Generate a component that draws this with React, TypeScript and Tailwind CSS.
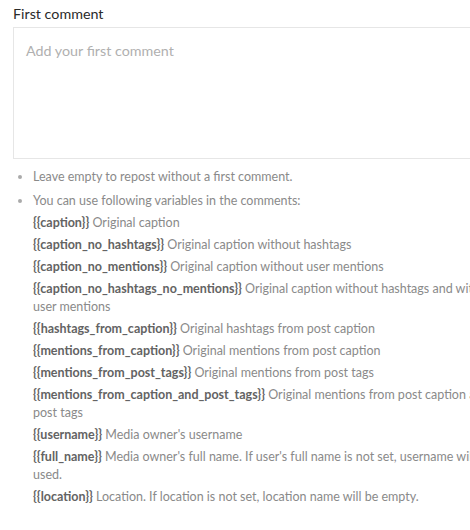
export default function App() {
  const vars: { name: string; desc: string }[] = [
    { name: "{{caption}}", desc: "Original caption" },
    { name: "{{caption_no_hashtags}}", desc: "Original caption without hashtags" },
    { name: "{{caption_no_mentions}}", desc: "Original caption without user mentions" },
    {
      name: "{{caption_no_hashtags_no_mentions}}",
      desc: "Original caption without hashtags and without user mentions",
    },
    { name: "{{hashtags_from_caption}}", desc: "Original hashtags from post caption" },
    { name: "{{mentions_from_caption}}", desc: "Original mentions from post caption" },
    { name: "{{mentions_from_post_tags}}", desc: "Original mentions from post tags" },
    {
      name: "{{mentions_from_caption_and_post_tags}}",
      desc: "Original mentions from post caption and post tags",
    },
    { name: "{{username}}", desc: "Media owner's username" },
    {
      name: "{{full_name}}",
      desc: "Media owner's full name. If user's full name is not set, username will be used.",
    },
    { name: "{{location}}", desc: "Location. If location is not set, location name will be empty." },
  ];

  return (
    <div className="h-[530px] w-[470px] overflow-hidden bg-white font-['Lato','Liberation_Sans',sans-serif]">
      <div className="w-[500px] pl-[13px] pt-[5px]">
        {/* Title */}
        <label className="block text-[14.3px] leading-[17px] text-[#2a2a2a]">First comment</label>
        <textarea
          className="mt-[5px] block h-[132px] w-full resize-none border border-[#e6e6e6] px-[12px] py-[12px] text-[14.3px] text-[#444] outline-none placeholder:text-[#b0b0b0]"
          placeholder="Add your first comment"
        />
        {/* Help list */}
        <ul className="mt-[9px] list-disc pl-[20px] text-[12.5px] leading-[18px] text-[#8a8a8a] marker:text-[#aaa]">
          <li>Leave empty to repost without a first comment.</li>
          <li className="mt-[6px]">
            You can use following variables in the comments:
            {vars.map((v) => (
              <div key={v.name} className="mt-[4px]">
                <span className="font-bold text-[#636363]">{v.name}</span> {v.desc}
              </div>
            ))}
          </li>
        </ul>
      </div>
    </div>
  );
}
